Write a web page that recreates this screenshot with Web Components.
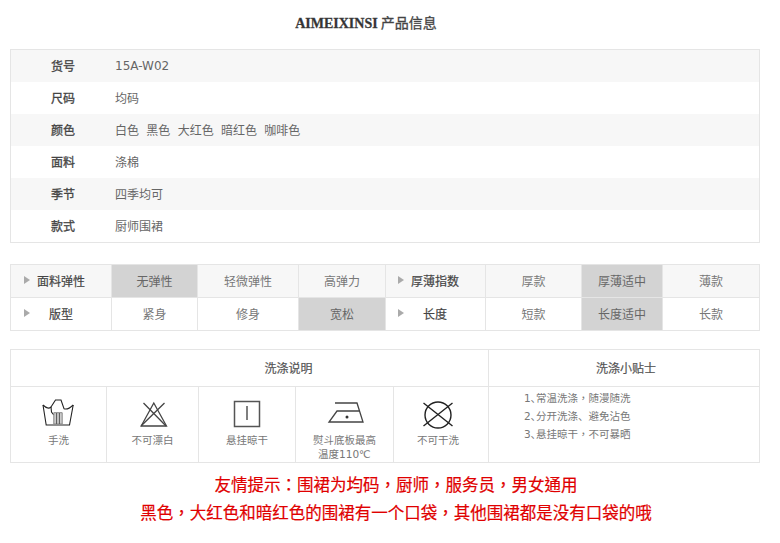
<!DOCTYPE html>
<html lang="zh-CN">
  <head>
    <meta charset="UTF-8" />
    <title>AIMEIXINSI 产品信息</title>
    <style>
      body {
        margin: 0;
        background: #fff;
        color: #666;
        font: 12px "Noto Sans CJK SC", "Liberation Sans", sans-serif;
      }
      .mid { font-family: "Noto Sans CJK TC", sans-serif; }
      .latin { font-family: "DejaVu Sans", sans-serif; }
    </style>
  </head>
  <body>
    <product-page>
      <info-title><b>AIMEIXINSI</b> 产品信息</info-title>

      <spec-table>
        <spec-row label="货号"><span class="latin">15A-W02</span></spec-row>
        <spec-row label="尺码">均码</spec-row>
        <spec-row label="颜色"><span>白色</span><span>黑色</span><span>大红色</span><span>暗红色</span><span>咖啡色</span></spec-row>
        <spec-row label="面料">涤棉</spec-row>
        <spec-row label="季节">四季均可</spec-row>
        <spec-row label="款式">厨师围裙</spec-row>
      </spec-table>

      <rating-table>
        <rating-row>
          <rating-head>面料弹性</rating-head>
          <rating-cell selected>无弹性</rating-cell>
          <rating-cell>轻微弹性</rating-cell>
          <rating-cell>高弹力</rating-cell>
          <rating-head style="padding-left: 11px">厚薄指数</rating-head>
          <rating-cell>厚款</rating-cell>
          <rating-cell selected>厚薄适中</rating-cell>
          <rating-cell>薄款</rating-cell>
        </rating-row>
        <rating-row>
          <rating-head wide>版型</rating-head>
          <rating-cell>紧身</rating-cell>
          <rating-cell>修身</rating-cell>
          <rating-cell selected>宽松</rating-cell>
          <rating-head wide style="padding-left: 11px">长度</rating-head>
          <rating-cell>短款</rating-cell>
          <rating-cell selected>长度适中</rating-cell>
          <rating-cell>长款</rating-cell>
        </rating-row>
      </rating-table>

      <care-panel>
        <care-item slot="items" style="width: 96px">
          <svg slot="icon" width="34" height="30" viewBox="0 0 34 30" fill="none" stroke="#222" stroke-width="1.100">
            <path d="M1 6 4.200 26H27.500L31.200 6" />
            <path d="M1 6C4 9 7 10 9 8L13.500 1H19L22 9.700C25 11 28 9 31.200 6" />
            <path d="M9 8 9.500 13 11.800 16" />
            <path d="M11.800 13.700H20.200V25H11.800Z" fill="#ccc" stroke="#888" stroke-width="1" />
            <path d="M14.600 14V25M17.400 14V25" stroke="#555" stroke-width="1" />
          </svg>
          手洗
        </care-item>
        <care-item slot="items" style="width: 92px">
          <svg slot="icon" width="30" height="30" viewBox="0 0 30 30" fill="none" stroke="#444" stroke-width="1.300">
            <path d="M15.800 4 3.200 27H28.500Z" />
            <path d="M5.500 4 28 27M26.500 4 3 27" />
          </svg>
          不可漂白
        </care-item>
        <care-item slot="items" style="width: 97px">
          <svg slot="icon" width="28" height="30" viewBox="0 0 28 30" fill="none" stroke="#555" stroke-width="1.500">
            <path d="M1.500 2.500H26.500V27.500H1.500Z" />
            <path d="M14 7V21" />
          </svg>
          悬挂晾干
        </care-item>
        <care-item slot="items" style="width: 98px">
          <svg slot="icon" width="38" height="30" viewBox="0 0 38 30" fill="none" stroke="#444" stroke-width="1.300">
            <path d="M9 4H31L37 23H3L11 12H33" />
            <circle cx="21" cy="18" r="1.500" fill="#333" stroke="none" />
          </svg>
          熨斗底板最高<br />温度110℃
        </care-item>
        <care-item slot="items" style="width: 95px; padding-right: 6px">
          <svg slot="icon" width="32" height="30" viewBox="0 0 32 30" fill="none" stroke="#222" stroke-width="1.400">
            <circle cx="16" cy="16" r="13" />
            <path d="M1.500 4 30.500 27M30.500 4 1.500 27" />
          </svg>
          不可干洗
        </care-item>
        <care-tips slot="tips">
          <tip-line n="1">常温洗涤<span class="mid" lang="zh-Hant">，</span>随漫随洗</tip-line>
          <tip-line n="2">分开洗涤、避免沾色</tip-line>
          <tip-line n="3">悬挂晾干<span class="mid" lang="zh-Hant">，</span>不可暴晒</tip-line>
        </care-tips>
      </care-panel>

      <notice-text lang="zh-Hant">
        <div>友情提示：围裙为均码，厨师，服务员，男女通用</div>
        <div>黑色，大红色和暗红色的围裙有一个口袋，其他围裙都是没有口袋的哦</div>
      </notice-text>
    </product-page>

    <script>
      const LINE = "#e5e5e5";
      const LATIN = `"DejaVu Sans", "Noto Sans CJK SC", sans-serif`;

      // every element below only differs by its markup, so one helper does the shadow root
      function define(name, html, init) {
        customElements.define(
          name,
          class extends HTMLElement {
            constructor() {
              super();
              const shadow = this.attachShadow({ mode: "open" });
              shadow.innerHTML = html;
              if (init) init(this, shadow);
            }
          }
        );
      }

      define("product-page", `
        <style>
          :host { display: block; width: 750px; padding: 0 20px 0 10px; }
        </style>
        <slot></slot>
      `);

      define("info-title", `
        <style>
          :host {
            display: block;
            height: 49px;
            line-height: 45px;
            padding-right: 38px;
            text-align: center;
            font-size: 14px;
            color: #444;
            -webkit-text-stroke: 0.3px #444;
          }
          ::slotted(b) {
            font-family: "Liberation Serif", serif;
            font-size: 14px;
            color: #333;
          }
        </style>
        <slot></slot>
      `);

      define("spec-table", `
        <style>
          :host { display: block; border: 1px solid ${LINE}; }
          ::slotted(spec-row:nth-child(odd)) { background: #f7f7f7; }
        </style>
        <slot></slot>
      `);

      define("spec-row", `
        <style>
          :host { display: flex; height: 32px; box-sizing: border-box; padding-bottom: 1px; align-items: center; line-height: 18px; }
          .label { width: 40px; margin-left: 40px; margin-right: 24px; color: #444; -webkit-text-stroke: 0.3px #444; }
          .value { display: flex; gap: 7.300px; color: #666; }
        </style>
        <div class="label"></div>
        <div class="value"><slot></slot></div>
      `, (el, shadow) => {
        shadow.querySelector(".label").textContent = el.getAttribute("label");
      });

      define("rating-table", `
        <style>
          :host { display: block; margin-top: 21px; border: solid ${LINE}; border-width: 1px 0 0 1px; }
          ::slotted(rating-row:nth-child(odd)) { background: #f7f7f7; }
        </style>
        <slot></slot>
      `);

      define("rating-row", `
        <style>
          :host {
            display: grid;
            grid-template-columns: 101px 86px 101px 87px 100px 96px 81px 97px;
            height: 33px;
          }
        </style>
        <slot></slot>
      `);

      define("rating-head", `
        <style>
          :host {
            display: flex;
            align-items: center;
            padding-left: 12px;
            padding-bottom: 2px;
            border: solid ${LINE};
            border-width: 0 1px 1px 0;
            color: #444;
            -webkit-text-stroke: 0.2px #444;
          }
          .arrow {
            width: 0;
            height: 0;
            margin: 0 7px 0 1px;
            border-left: 6px solid #aaa;
            border-top: 4px solid transparent;
            border-bottom: 4px solid transparent;
          }
          :host([wide]) .arrow { margin-right: 19px; }
        </style>
        <div class="arrow"></div>
        <slot></slot>
      `);

      define("rating-cell", `
        <style>
          :host {
            display: flex;
            align-items: center;
            justify-content: center;
            padding-bottom: 2px;
            border: solid ${LINE};
            border-width: 0 1px 1px 0;
            color: #777;
          }
          :host([selected]) { background: #d3d3d3; color: #666; }
        </style>
        <slot></slot>
      `);

      define("care-panel", `
        <style>
          :host { display: block; margin-top: 18px; border: 1px solid ${LINE}; }
          .head, .body { display: flex; }
          .head { height: 36px; border-bottom: 1px solid ${LINE}; }
          .head div {
            display: flex;
            align-items: center;
            justify-content: center;
            box-sizing: border-box;
            padding-bottom: 2px;
            color: #555;
            -webkit-text-stroke: 0.2px #555;
          }
          .head .left { width: 478px; padding-left: 78px; border-right: 1px solid ${LINE}; }
          .head .right { flex: 1; padding-left: 4px; }
          .body { height: 75px; }
        </style>
        <div class="head">
          <div class="left">洗涤说明</div>
          <div class="right">洗涤小贴士</div>
        </div>
        <div class="body">
          <slot name="items"></slot>
          <slot name="tips"></slot>
        </div>
      `);

      define("care-item", `
        <style>
          :host {
            display: flex;
            flex-direction: column;
            align-items: center;
            box-sizing: border-box;
            padding-top: 12px;
            border-right: 1px solid ${LINE};
            font-size: 10.500px;
            font-family: ${LATIN};
            line-height: 14px;
            color: #777;
            text-align: center;
          }
          .icon { height: 30px; display: flex; align-items: center; justify-content: center; }
          .label { margin-top: 4px; }
        </style>
        <div class="icon"><slot name="icon"></slot></div>
        <div class="label"><slot></slot></div>
      `);

      define("care-tips", `
        <style>
          :host {
            display: block;
            padding: 2px 0 0 35px;
            font-size: 10.500px;
            line-height: 18px;
            color: #777;
          }
        </style>
        <slot></slot>
      `);

      define("tip-line", `
        <style>
          :host { display: block; }
          .n { font-feature-settings: "palt"; font-family: ${LATIN}; font-size: 10.500px; }
        </style>
        <span class="n"></span><slot></slot>
      `, (el, shadow) => {
        shadow.querySelector(".n").textContent = el.getAttribute("n") + "、";
      });

      define("notice-text", `
        <style>
          :host {
            display: block;
            margin-top: 7px;
            padding-left: 22px;
            text-align: center;
            font-family: "Noto Sans CJK TC", sans-serif;
            font-size: 16.500px;
            line-height: 28px;
            color: #e00000;
            -webkit-text-stroke: 0.2px #e00000;
          }
        </style>
        <slot></slot>
      `);
    </script>
  </body>
</html>
